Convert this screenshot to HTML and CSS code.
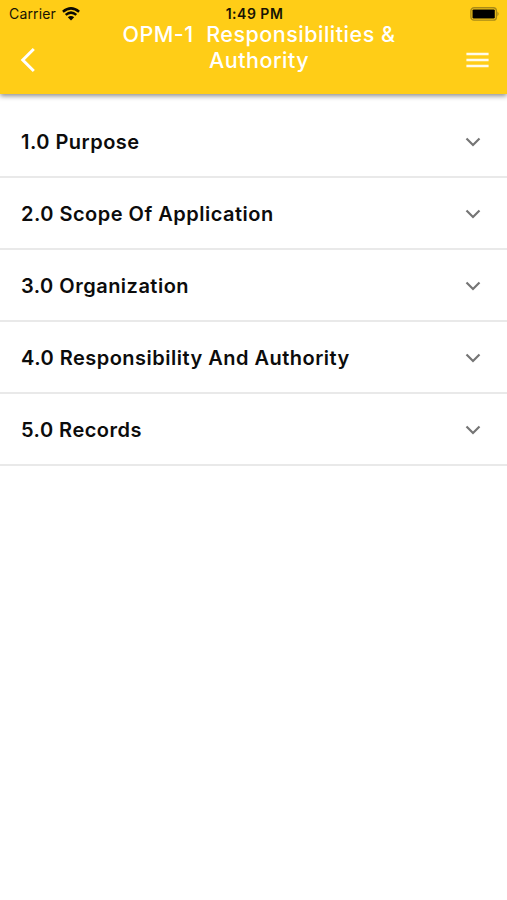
FILE: index.html
```html
<!DOCTYPE html>
<html lang="en">
<head>
<meta charset="utf-8">
<title>OPM-1 Responsibilities &amp; Authority</title>
<link rel="stylesheet" href="styles.css">
</head>
<body>
<header class="header">
  <div class="status">
    <div class="carrier"><span class="carrier-name">Carrier</span>
      <svg class="wifi" width="18" height="14" viewBox="0 0 18 14"><path d="M.9 4.8Q9-2 17.1 4.8M3.7 7.9Q9 3.4 14.3 7.9" fill="none" stroke="#0b0a03" stroke-width="2.5"/><path d="M5.8 10.2Q9 7.6 12.2 10.2L9 13.4Z" fill="#0b0a03"/></svg>
    </div>
    <span class="time">1:49 PM</span>
    <svg class="battery" width="30" height="14" viewBox="0 0 30 14"><rect x=".9" y=".7" width="25.5" height="12.4" rx="3.2" fill="none" stroke="#a98a18" stroke-width="1.4"/><rect x="2.5" y="2.4" width="22.3" height="9" rx="1.2" fill="#000"/><path d="M27.4 4.6q2.6 2.3 0 4.6z" fill="#a98a18"/></svg>
  </div>
  <div class="bar">
    <svg class="back" width="16" height="26" viewBox="0 0 16 26"><path d="M13.8 2L2.8 13L13.8 24" fill="none" stroke="#fff" stroke-width="3"/></svg>
    <h1 class="title"><span class="line">OPM-1&nbsp; Responsibilities &amp;</span><span class="line">Authority</span></h1>
    <svg class="menu" width="23" height="16" viewBox="0 0 23 16"><path d="M.4 2H22.6M.4 8H22.6M.4 14H22.6" stroke="#fffbea" stroke-width="2.6"/></svg>
  </div>
</header>
<main class="list">
  <div class="row"><span class="label">1.0 Purpose</span><svg class="chev" width="16" height="10" viewBox="0 0 16 10"><path d="M1.5 1.5L8 8L14.5 1.5"/></svg></div>
  <div class="row"><span class="label">2.0 Scope Of Application</span><svg class="chev" width="16" height="10" viewBox="0 0 16 10"><path d="M1.5 1.5L8 8L14.5 1.5"/></svg></div>
  <div class="row"><span class="label">3.0 Organization</span><svg class="chev" width="16" height="10" viewBox="0 0 16 10"><path d="M1.5 1.5L8 8L14.5 1.5"/></svg></div>
  <div class="row"><span class="label">4.0 Responsibility And Authority</span><svg class="chev" width="16" height="10" viewBox="0 0 16 10"><path d="M1.5 1.5L8 8L14.5 1.5"/></svg></div>
  <div class="row"><span class="label">5.0 Records</span><svg class="chev" width="16" height="10" viewBox="0 0 16 10"><path d="M1.5 1.5L8 8L14.5 1.5"/></svg></div>
</main>
</body>
</html>
```
FILE: styles.css
```css
* { box-sizing: border-box; }
body { margin: 0; background: #fff; font-family: Inter, "Liberation Sans", sans-serif; }
svg { display: block; }
.header { height: 94px; background: #ffcd17; box-shadow: 0 2px 5px rgba(0,0,0,.45); }
.status { display: grid; grid-template-columns: 1fr auto 1fr; align-items: center; height: 27px; padding: 0 7px 0 9px; color: #171304; font-size: 14px; }
.carrier { display: flex; align-items: center; gap: 6px; letter-spacing: .15px; }
.time { font-weight: 600; letter-spacing: .5px; }
.battery { justify-self: end; }
.bar { display: grid; grid-template-columns: 16px 1fr 23px; align-items: start; padding: 0 18px 0 20px; }
.back { margin-top: 20px; }
.menu { margin-top: 25px; }
.title { margin: -6px 0 0; padding-left: 16px; color: #fff; font-size: 21.5px; font-weight: 500; line-height: 26px; text-align: center; letter-spacing: .5px; }
.line { display: block; white-space: nowrap; }
.list { padding-top: 12px; }
.row { display: flex; align-items: center; justify-content: space-between; height: 72px; padding: 2px 26px 0 21px; border-bottom: 2px solid #e9e9e9; }
.label { color: #0c0c0c; font-size: 20px; font-weight: 600; letter-spacing: .49px; white-space: nowrap; }
.chev path { fill: none; stroke: #757575; stroke-width: 2.2; }
```
